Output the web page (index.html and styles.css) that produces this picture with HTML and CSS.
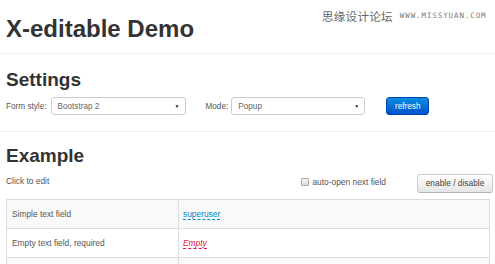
FILE: index.html
```html
<!DOCTYPE html>
<html lang="en">
<head>
<meta charset="utf-8">
<title>X-editable Demo</title>
<link rel="stylesheet" href="styles.css">
</head>
<body>
<div class="watermark"><span class="wm-cn">思缘设计论坛</span><span class="wm-en">WWW.MISSYUAN.COM</span></div>
<header class="header">
  <h1 class="title">X-editable Demo</h1>
</header>
<section class="section settings">
  <h2 class="heading">Settings</h2>
  <div class="form-row">
    <span class="label">Form style:</span>
    <div class="select select-style"><span>Bootstrap 2</span><span class="arrow">&#9660;</span></div>
    <span class="label label-mode">Mode:</span>
    <div class="select select-mode"><span>Popup</span><span class="arrow">&#9660;</span></div>
    <button class="btn-primary">refresh</button>
  </div>
</section>
<section class="section example">
  <h2 class="heading">Example</h2>
  <div class="toolbar">
    <span class="hint">Click to edit</span>
    <div class="toolbar-right">
      <label class="check"><span class="box"></span>auto-open next field</label>
      <button class="btn">enable / disable</button>
    </div>
  </div>
  <table class="grid">
    <tr class="odd"><td class="c1">Simple text field</td><td class="c2"><a class="editable">superuser</a></td></tr>
    <tr><td class="c1">Empty text field, required</td><td class="c2"><a class="editable empty">Empty</a></td></tr>
    <tr class="odd last"><td class="c1"></td><td class="c2"></td></tr>
  </table>
</section>
</body>
</html>
```

FILE: styles.css
```css
* { box-sizing: border-box; }
html, body { margin: 0; padding: 0; background: #fff; overflow: hidden; }
body {
  font-family: "Liberation Sans", Arial, sans-serif;
  color: #333;
  width: 495px;
  height: 264px;
  position: relative;
}
.watermark {
  position: absolute;
  left: 322px;
  top: 9px;
  display: flex;
  align-items: center;
  gap: 7px;
  color: #666;
}
.wm-cn {
  font-family: "Noto Sans CJK SC", sans-serif;
  font-size: 11.5px;
  line-height: 14px;
  letter-spacing: 0.3px;
}
.wm-en {
  font-family: "DejaVu Sans Mono", monospace;
  font-size: 7.5px;
  line-height: 10px;
  letter-spacing: 0.9px;
  color: #777;
}
.header {
  padding: 16px 5px 11px 6px;
  border-bottom: 1px solid #eee;
}
.title {
  margin: 0;
  font-size: 24px;
  line-height: 26px;
  font-weight: bold;
  color: #333;
}
.section { padding: 0 5px 0 6px; }
.heading {
  margin: 0;
  font-size: 19px;
  line-height: 22px;
  font-weight: bold;
  color: #333;
}
.settings {
  padding-top: 15px;
  padding-bottom: 16px;
  border-bottom: 1px solid #eee;
}
.form-row {
  margin-top: 6px;
  display: flex;
  align-items: center;
  height: 18px;
  font-size: 8.2px;
}
.label { color: #555; margin-right: 4px; }
.label-mode { margin-left: 20px; margin-right: 3px; }
.select {
  height: 18px;
  border: 1px solid #ccc;
  border-radius: 3px;
  background: #fff;
  display: flex;
  align-items: center;
  justify-content: space-between;
  padding: 0 5px 0 6px;
  color: #666;
  font-size: 8.2px;
}
.select-style { width: 135px; }
.select-mode { width: 134px; }
.arrow { font-size: 5px; color: #222; }
.btn-primary {
  margin-left: 21px;
  width: 43px;
  height: 18px;
  border: 1px solid #0048b0;
  border-radius: 3px;
  background: linear-gradient(#0a8ee0, #0052cc);
  color: #fff;
  font-family: inherit;
  font-size: 8.2px;
  padding: 0;
}
.example { padding-top: 13px; }
.toolbar {
  margin-top: 6px;
  display: flex;
  align-items: center;
  justify-content: space-between;
  height: 20px;
  font-size: 8.4px;
}
.hint { color: #555; margin-top: -5px; }
.toolbar-right { display: flex; align-items: center; margin-right: -3px; }
.check {
  display: flex;
  align-items: center;
  color: #555;
  margin-right: 31px;
  margin-top: -2px;
}
.box {
  width: 8px;
  height: 8px;
  border: 1px solid #aaa;
  border-radius: 1px;
  background: linear-gradient(#f4f4f4, #dcdcdc);
  margin-right: 3px;
}
.btn {
  width: 76px;
  height: 19px;
  border: 1px solid #ccc;
  border-bottom-color: #b3b3b3;
  border-radius: 3px;
  background: linear-gradient(#fff, #e6e6e6);
  color: #444;
  font-family: inherit;
  font-size: 8.4px;
  padding: 0;
}
.grid {
  margin-top: 6px;
  width: 484px;
  border-collapse: collapse;
  font-size: 8.4px;
}
.grid td {
  height: 29px;
  border: 1px solid #ddd;
  vertical-align: middle;
  color: #555;
}
.grid tr.last td { height: 8px; }
.grid tr.odd td { background: #f9f9f9; }
.c1 { width: 172px; padding-left: 5px; }
.c2 { padding-left: 4px; }
.editable {
  color: #0088cc;
  border-bottom: 1px dashed #0088cc;
  text-decoration: none;
}
.editable.empty {
  color: #dd1144;
  font-style: italic;
  border-bottom-color: #dd1144;
}
```
